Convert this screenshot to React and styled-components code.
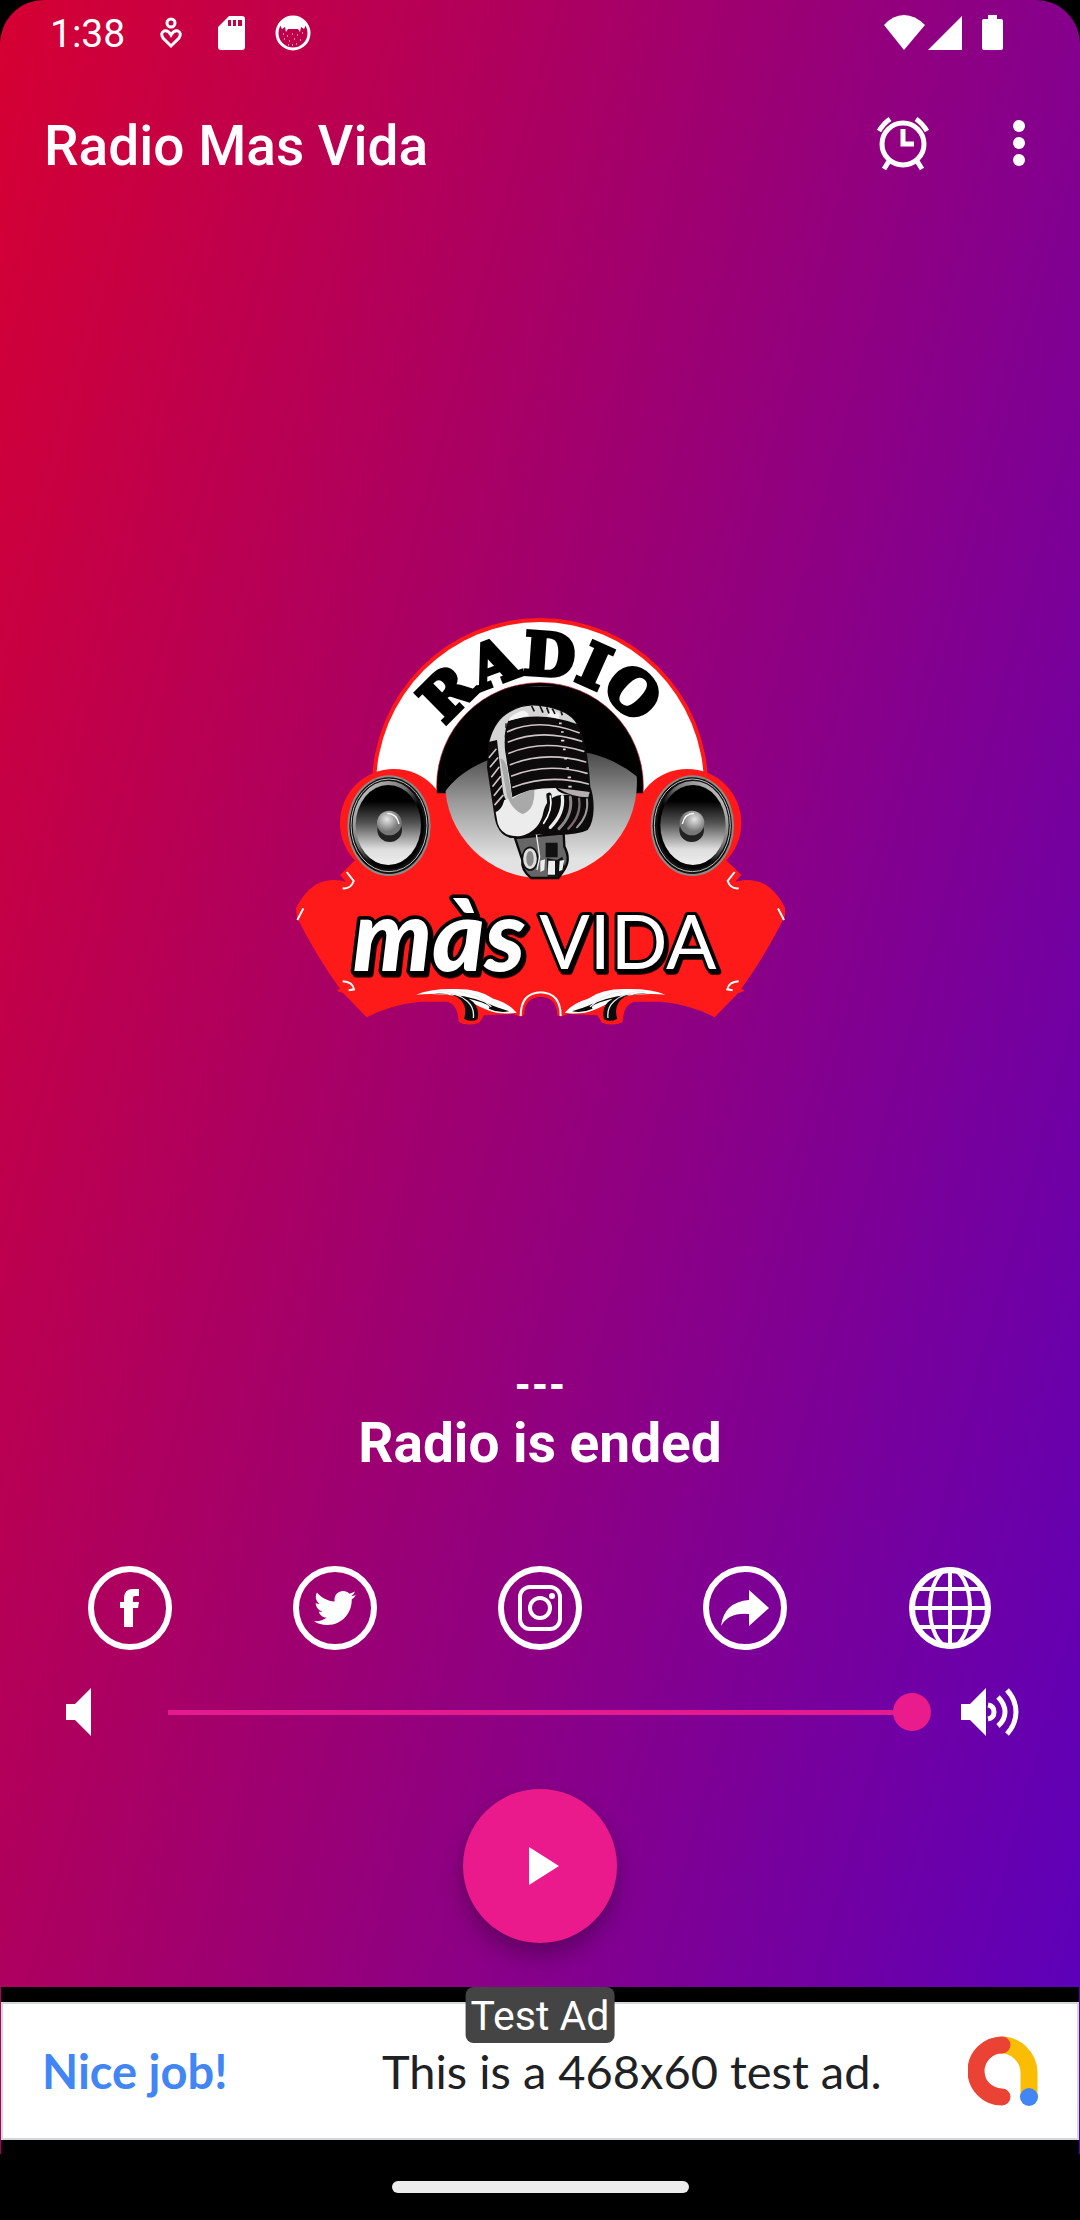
import React from "react";
import styled, { createGlobalStyle } from "styled-components";
import { FaTwitter } from "react-icons/fa";

const GlobalStyle = createGlobalStyle`
  *, *::before, *::after { box-sizing: border-box; }
  body {
    margin: 0;
    background: #000;
    color: #fff;
    font-family: Roboto, "Liberation Sans", sans-serif;
  }
`;

const Screen = styled.div`
  min-height: 100vh;
  display: flex;
  flex-direction: column;
`;

const AppSurface = styled.div`
  flex: 1;
  display: flex;
  flex-direction: column;
  border-radius: 44px 44px 0 0;
  background: linear-gradient(105deg, #d60032 0%, #5a00bd 100%);
`;

const StatusBar = styled.div`
  display: flex;
  align-items: center;
  justify-content: space-between;
  height: 66px;
  padding: 0 77px 0 50px;
`;

const StatusGroup = styled.div`
  display: flex;
  align-items: center;
  gap: ${(p) => p.$gap}px;
`;

const Clock = styled.time`
  width: 78px;
  padding-top: 2px;
  font-size: 39px;
  line-height: 44px;
`;

const StatusIcon = styled.svg`
  display: block;
  width: ${(p) => p.$w || 36}px;
  height: 36px;
  fill: #fff;
`;

const AppBar = styled.header`
  display: flex;
  align-items: center;
  height: 158px;
  padding: 0 32px 0 44px;
`;

const Title = styled.h1`
  flex: 1;
  margin: 0;
  padding-top: 2px;
  font-size: 55px;
  line-height: 64px;
  font-weight: 500;
`;

const BarButton = styled.button`
  display: grid;
  place-items: center;
  width: ${(p) => p.$w}px;
  height: 80px;
  padding: 0 0 4px;
  border: 0;
  background: none;
  color: #fff;
`;

const Stage = styled.main`
  flex: 1;
  display: flex;
  align-items: center;
  justify-content: center;
  padding-top: 63px;
`;

const LogoArt = styled.svg`
  display: block;
  width: 490px;
  height: 415px;
`;

const NowPlaying = styled.section`
  display: flex;
  flex-direction: column;
  align-items: center;
  font-weight: 700;
`;

const Track = styled.p`
  margin: 0;
  padding-top: 2px;
  font-size: 38px;
  line-height: 52px;
  font-weight: 900;
`;

const StateLine = styled.p`
  margin: 0;
  font-size: 55px;
  line-height: 64px;
`;

const SocialRow = styled.nav`
  display: grid;
  grid-template-columns: repeat(5, 1fr);
  justify-items: center;
  padding: 91px 27px 0;
`;

const SocialLink = styled.a`
  display: grid;
  place-items: center;
  width: 84px;
  height: 84px;
  border: ${(p) => (p.$bare ? 0 : 6)}px solid #fff;
  border-radius: 50%;
  color: #fff;
  svg { display: block; }
`;

const VolumeRow = styled.div`
  display: flex;
  align-items: center;
  height: 48px;
  margin-top: 38px;
  padding: 0 61px 0 66px;
  svg { display: block; flex: none; }
`;

const VolumeSlider = styled.input`
  appearance: none;
  flex: 1;
  min-width: 0;
  height: 38px;
  margin: 0 30px 0 58px;
  background: linear-gradient(#e41b8e, #e41b8e) center / calc(100% - 38px) 5px no-repeat;
  &::-webkit-slider-thumb {
    appearance: none;
    width: 38px;
    height: 38px;
    border-radius: 50%;
    background: #ea1b8d;
  }
`;

const PlayButton = styled.button`
  display: grid;
  place-items: center;
  align-self: center;
  width: 154px;
  height: 154px;
  margin: 53px 0 44px;
  padding: 0 0 0 8px;
  border: 0;
  border-radius: 50%;
  background: #ea1a8c;
  box-shadow: 0 14px 22px rgba(0, 0, 0, 0.24), 0 2px 12px rgba(0, 0, 0, 0.08);
`;

const AdSlot = styled.aside`
  position: relative;
  margin: 0 1px;
  padding: 15px 0 14px;
  background: #000;
`;

const AdCard = styled.a`
  display: grid;
  grid-template-columns: 340px 1fr auto;
  align-items: center;
  height: 138px;
  padding: 0 39px;
  border: 2px solid #d3d7da;
  background: #fff;
  color: #202124;
  font-family: Lato, "Open Sans", sans-serif;
  font-size: 47px;
  line-height: 56px;
  text-decoration: none;
  white-space: nowrap;
`;

const AdHeadline = styled.strong`
  color: #4285f4;
  font-weight: 700;
`;

const AdBadge = styled.span`
  position: absolute;
  top: 0;
  left: 50%;
  transform: translateX(-50%);
  padding: 2px 5px 0;
  border-radius: 8px;
  background: #444;
  font-size: 41px;
  line-height: 54px;
  white-space: nowrap;
`;

const NavBar = styled.div`
  display: grid;
  place-items: center;
  height: 66px;
`;

const HomePill = styled.div`
  width: 297px;
  height: 12px;
  border-radius: 6px;
  background: #ececec;
`;

function LogoSide() {
  return (
    <g>
      <circle cx="342" cy="669" r="162" fill="#ff1a1a" />
      <path
        fill="#ff1a1a"
        d="M440 580H784V1190Q734 1190 732 1246L722 1250 700 1242 612 1246 598 1268Q562 1280 536 1266 534 1212 500 1205H420Q330 1214 260 1252L190 1180 170 1172 180 1166Q110 1070 50 950L48 925Q70 880 105 855 150 832 198 845L180 825 205 800Z"
      />
      <g fill="none" stroke="#fff" strokeWidth="6">
        <path d="M200 816 221 843Q212 868 188 865M188 1144Q218 1146 222 1168L206 1171M70 925 52 960" />
        <path d="M722 1248Q722 1178 784 1177" />
      </g>
      <ellipse cx="327" cy="677" rx="125" ry="151" fill="#8f8a86" />
      <ellipse cx="327" cy="677" rx="119" ry="145" fill="#111" />
      <ellipse cx="327" cy="676" rx="114" ry="139" fill="none" stroke="#bbb" strokeWidth="3" />
      <ellipse cx="325" cy="675" rx="107" ry="132" fill="url(#rim)" />
      <ellipse cx="325" cy="675" rx="98" ry="120" fill="url(#cone)" />
      <ellipse cx="329" cy="690" rx="37" ry="36" fill="#222" />
      <circle cx="328" cy="669" r="37" fill="url(#dome)" />
      <path d="M322 640Q350 640 357 672" fill="none" stroke="#fff" strokeWidth="4" />
      <path
        fill="#fff"
        d="M408 1184Q450 1165 530 1167 600 1167 640 1196 684 1208 710 1238 660 1246 622 1230 584 1216 552 1192 480 1178 408 1184Z"
      />
      <path
        fill="#0b0b0b"
        d="M440 1182Q500 1176 530 1190 566 1214 552 1256 572 1268 592 1258 602 1216 566 1196 640 1214 626 1226 655 1240 688 1234 648 1222 628 1212 550 1178 440 1182Z"
      />
      <path
        d="M470 1174Q530 1174 562 1204 584 1224 580 1254M536 1174Q590 1180 634 1220"
        fill="none"
        stroke="#eee"
        strokeWidth="4"
      />
    </g>
  );
}

function Microphone() {
  return (
    <g transform="translate(435 240)">
      <path
        d="M270 474 416 460 418 500Q440 540 414 575L400 594H318Q288 570 292 540Z"
        fill="#666"
        stroke="#0c0909"
        strokeWidth="7"
      />
      <ellipse cx="315" cy="536" rx="23" ry="34" fill="#ddd" stroke="#111" strokeWidth="5" />
      <ellipse cx="315" cy="536" rx="11" ry="23" fill="#888" />
      <path d="M334 462 344 530 336 570" fill="none" stroke="#eee" strokeWidth="4" />
      <path d="M362 488H398V532H362ZM366 535 396 540 412 530 420 560 400 590H368Z" fill="#111" />
      <path d="M370 542H390V584H368ZM404 542 418 540 412 570 402 574ZM346 542 360 538 358 570 346 576Z" fill="#eee" />
      <path
        d="M190 185Q205 118 254 92 300 65 350 76 438 88 458 132 488 185 496 320 506 345 506 385 505 430 488 450 450 470 342 462 290 474 258 474 214 465 207 400L186 262Z"
        fill="#0d0a0b"
      />
      <path
        d="M193 185Q210 120 255 96 300 70 350 79 430 90 455 132 350 92 250 122 236 150 240 210L258 320Q262 350 264 372 236 370 232 320L216 180Z"
        fill="#d4d4d4"
      />
      <path d="M274 100Q300 82 312 106L250 123Q256 108 274 100ZM376 90 404 100 402 116 366 108Z" fill="#f4f4f4" />
      <path d="M320 78 328 94M345 78 354 98M365 82 372 100M382 86 390 102M408 94 412 106" stroke="#111" strokeWidth="5" />
      <path
        d="M212 396Q230 390 238 360L262 352Q310 324 392 324 402 342 440 346 372 334 356 392 346 452 288 468 232 474 218 430Z"
        fill="#ececec"
      />
      <path d="M226 235Q246 240 250 290L262 356Q310 326 328 330 330 392 292 402 262 390 246 348Z" fill="#a9a9a9" />
      <g fill="none" stroke="#cfc4c8" strokeWidth="5" strokeLinecap="round">
        <path d="M248 155Q340 112 462 158M250 186Q350 144 470 184M252 220Q355 176 476 214M256 254Q360 212 482 246M260 288Q365 246 486 280M264 322Q370 280 490 312" />
        <path d="M193 232 213 208M196 260 218 234M200 290 222 262M204 318 226 290M208 346 230 318M210 374 234 346" />
      </g>
      <path d="M402 130H410M408 156H416M408 182H418M414 208H422M418 236H426M424 264H432M428 292H438M430 320H440" stroke="#ddd" strokeWidth="5" />
      <path d="M243 130V150L240 180 244 200 246 235 252 270 258 300 264 350" fill="none" stroke="#111" strokeWidth="4" strokeDasharray="14 14" />
      <path d="M398 325Q450 330 494 336L490 352Q440 352 398 325Z" fill="#b5aeb0" />
      <g fill="none" strokeLinecap="round">
        <path d="M372 346Q382 390 352 434" stroke="#111" strokeWidth="16" />
        <path d="M376 348Q384 390 356 430" stroke="#fff" strokeWidth="5" />
        <path d="M412 350Q418 400 376 442" stroke="#eee" strokeWidth="10" />
        <path d="M436 352Q444 405 402 446" stroke="#8b8788" strokeWidth="9" />
        <path d="M462 356Q470 405 430 446" stroke="#76686c" strokeWidth="7" />
        <path d="M486 358Q492 405 456 442" stroke="#999" strokeWidth="6" />
      </g>
    </g>
  );
}

const Wordmark = styled.text`
  fill: #fff;
  stroke: #000;
  stroke-linejoin: round;
  paint-order: stroke;
  font-family: Lato, "Open Sans", sans-serif;
  filter: drop-shadow(6px 8px 0 #000);
`;

const ArcWord = styled.text`
  fill: #000;
  stroke: #000;
  stroke-width: 13px;
  font-family: "DejaVu Serif", serif;
  font-weight: 700;
  font-size: 176px;
  text-anchor: middle;
`;

function RadioLogo() {
  return (
    <LogoArt viewBox="45 45 1470 1245" role="img" aria-label="Radio màs Vida">
      <defs>
        <linearGradient id="cone" x1="0" y1="0" x2="0" y2="1">
          <stop offset="0.2" stopColor="#000" />
          <stop offset="0.48" stopColor="#555" />
          <stop offset="0.8" stopColor="#ddd" />
          <stop offset="1" stopColor="#eee" />
        </linearGradient>
        <linearGradient id="rim" x1="0" y1="0" x2="1" y2="1">
          <stop offset="0" stopColor="#ddd" />
          <stop offset="0.4" stopColor="#777" />
          <stop offset="0.6" stopColor="#000" />
          <stop offset="1" stopColor="#000" />
        </linearGradient>
        <radialGradient id="dome" cx="0.4" cy="0.35">
          <stop offset="0" stopColor="#e6e6e6" />
          <stop offset="1" stopColor="#777" />
        </radialGradient>
        <linearGradient id="disc" x1="0" y1="0" x2="0" y2="1">
          <stop offset="0.35" stopColor="#4a4a4a" />
          <stop offset="0.6" stopColor="#999" />
          <stop offset="0.9" stopColor="#e2e2e2" />
        </linearGradient>
        <clipPath id="upper">
          <rect x="0" y="0" width="1560" height="580" />
        </clipPath>
        <path id="arc" d="M445 562A336 336 0 0 1 1117 562" />
      </defs>
      <g clipPath="url(#upper)">
        <circle cx="780" cy="558" r="504" fill="#ff1a1a" />
        <circle cx="780" cy="558" r="492" fill="#fff" />
      </g>
      <LogoSide />
      <g transform="translate(1564 0) scale(-1 1)">
        <LogoSide />
      </g>
      <circle cx="780" cy="558" r="310" fill="#000" stroke="#c0203c" strokeWidth="2" clipPath="url(#upper)" />
      <circle cx="783" cy="546" r="288" fill="url(#disc)" />
      <path d="M492 579Q540 510 640 474 780 440 930 460 1010 480 1072 530L1060 440 1020 370 950 300 860 260H700L610 300 540 370 500 450Z" fill="#000" />
      <Microphone />
      <ArcWord>
        <textPath href="#arc" startOffset="50%">RADIO</textPath>
      </ArcWord>
      <Wordmark x="218" y="1112" strokeWidth="22" fontStyle="italic" fontWeight="900" fontSize="300">
        màs
      </Wordmark>
      <Wordmark x="778" y="1108" strokeWidth="18" fontSize="224">
        VIDA
      </Wordmark>
    </LogoArt>
  );
}

export default function App() {
  return (
    <Screen>
      <GlobalStyle />
      <AppSurface>
        <StatusBar>
          <StatusGroup $gap={25}>
            <Clock>1:38</Clock>
            <StatusIcon viewBox="0 0 36 36">
              <circle cx="18" cy="8" r="4" fill="none" stroke="#fff" strokeWidth="3" />
              <path
                d="M18 31 10 23Q7 18 11 16 15 15 18 20 21 15 25 16 29 18 26 23Z"
                fill="none"
                stroke="#fff"
                strokeWidth="3"
              />
            </StatusIcon>
            <StatusIcon viewBox="0 0 36 36">
              <path
                fillRule="evenodd"
                d="M15 1H28Q31 1 31 4V32Q31 35 28 35H7Q4 35 4 32V12ZM14 5V11H17V5ZM19 5V11H22V5ZM24 5V11H28V5Z"
              />
            </StatusIcon>
            <StatusIcon viewBox="0 0 36 36">
              <circle cx="18" cy="18" r="16" fill="none" stroke="#fff" strokeWidth="3" />
              <path d="M5 10Q10 2 18 2T31 10L29 14 26 12 25 17 23 14H13L11 17 10 12 7 14Z" />
              <path
                d="M8 19h1M12 21h1M17 19h1M22 20h1M27 18h1M9 24h1M14 26h1M19 24h1M25 25h1M17 30h1M21 29h1M13 30h1"
                stroke="#fff"
                strokeWidth="1"
              />
            </StatusIcon>
          </StatusGroup>
          <StatusGroup $gap={0}>
            <StatusIcon $w={43} viewBox="0 0 43 36">
              <path d="M1 10Q10 0 21 0T42 10L21 35Z" />
            </StatusIcon>
            <StatusIcon $w={56} viewBox="0 0 56 36">
              <path d="M2 35H36V1Z" />
            </StatusIcon>
            <StatusIcon $w={21} viewBox="0 0 21 36">
              <path d="M6 0H15V4H19Q21 4 21 6V33Q21 35 19 35H2Q0 35 0 33V6Q0 4 2 4H6Z" />
            </StatusIcon>
          </StatusGroup>
        </StatusBar>

        <AppBar>
          <Title>Radio Mas Vida</Title>
          <BarButton $w={174} aria-label="Sleep timer">
            <svg width="56" height="56" viewBox="0 0 56 56" fill="none" stroke="#fff">
              <circle cx="28" cy="29" r="21" strokeWidth="5" />
              <path d="M28 14V29H39" strokeWidth="5" />
              <path d="M4 16Q9 8 15 4M52 16Q47 8 41 4" strokeWidth="5" />
              <path d="M14 46 9 54M42 46 47 54" strokeWidth="5" />
            </svg>
          </BarButton>
          <BarButton $w={58} aria-label="More options">
            <svg width="12" height="46" viewBox="0 0 12 46" fill="#fff">
              <circle cx="6" cy="6" r="6" />
              <circle cx="6" cy="23" r="6" />
              <circle cx="6" cy="40" r="6" />
            </svg>
          </BarButton>
        </AppBar>

        <Stage>
          <RadioLogo />
        </Stage>

        <NowPlaying>
          <Track>---</Track>
          <StateLine>Radio is ended</StateLine>
        </NowPlaying>

        <SocialRow>
          <SocialLink href="#facebook" aria-label="Facebook">
            <svg width="20" height="38" viewBox="0 0 20 38" fill="#fff">
              <path d="M4 38V19H0V13H4V9Q4 0 13 0H19V7H15Q13 7 13 9V13H19L18 19H13V38Z" />
            </svg>
          </SocialLink>
          <SocialLink href="#twitter" aria-label="Twitter">
            <FaTwitter size={42} />
          </SocialLink>
          <SocialLink href="#instagram" aria-label="Instagram">
            <svg width="44" height="46" viewBox="0 0 44 46" fill="none" stroke="#fff" strokeWidth="4">
              <rect x="2" y="2" width="40" height="42" rx="10" />
              <circle cx="22" cy="23" r="10" />
              <circle cx="34" cy="11" r="3" fill="#fff" stroke="none" />
            </svg>
          </SocialLink>
          <SocialLink href="#share" aria-label="Share">
            <svg width="48" height="36" viewBox="0 0 48 36" fill="#fff">
              <path d="M0 36Q3 12 28 10V0L48 18 28 36V24Q8 22 0 36Z" />
            </svg>
          </SocialLink>
          <SocialLink $bare href="#website" aria-label="Website">
            <svg width="84" height="84" viewBox="0 0 84 84" fill="none" stroke="#fff" strokeWidth="4">
              <circle cx="42" cy="42" r="38" strokeWidth="6" />
              <path d="M42 4V80M5 42H79M10 23H74M10 61H74" />
              <ellipse cx="42" cy="42" rx="20" ry="39" />
            </svg>
          </SocialLink>
        </SocialRow>

        <VolumeRow>
          <svg width="25" height="48" viewBox="0 0 25 48" fill="#fff">
            <path d="M0 16H9L25 0V48L9 32H0Z" />
          </svg>
          <VolumeSlider type="range" min="0" max="100" defaultValue="100" aria-label="Volume" />
          <svg width="58" height="48" viewBox="0 0 58 48" fill="none" stroke="#fff" strokeWidth="5">
            <path d="M0 16H9L25 0V48L9 32H0Z" fill="#fff" stroke="none" />
            <path d="M27 17Q33 18 33 24T27 31" />
            <path d="M37 9Q44 16 44 24T37 38" />
            <path d="M46 2Q55 12 55 24T46 46" />
          </svg>
        </VolumeRow>

        <PlayButton aria-label="Play">
          <svg width="30" height="38" viewBox="0 0 30 38" fill="#fff">
            <path d="M0 0 30 19 0 38Z" />
          </svg>
        </PlayButton>

        <AdSlot>
          <AdCard href="#ad">
            <AdHeadline>Nice job!</AdHeadline>
            <span>This is a 468x60 test ad.</span>
            <svg width="70" height="70" viewBox="0 0 70 70" fill="none" strokeWidth="17" strokeLinecap="round">
              <path d="M33 9A28 28 0 0 1 61 36V61" stroke="#fbbc04" />
              <path d="M34 9A26 26 0 0 0 34 61" stroke="#ea4335" />
              <circle cx="61" cy="61" r="9" fill="#4285f4" />
            </svg>
          </AdCard>
          <AdBadge>Test Ad</AdBadge>
        </AdSlot>
      </AppSurface>
      <NavBar>
        <HomePill />
      </NavBar>
    </Screen>
  );
}
